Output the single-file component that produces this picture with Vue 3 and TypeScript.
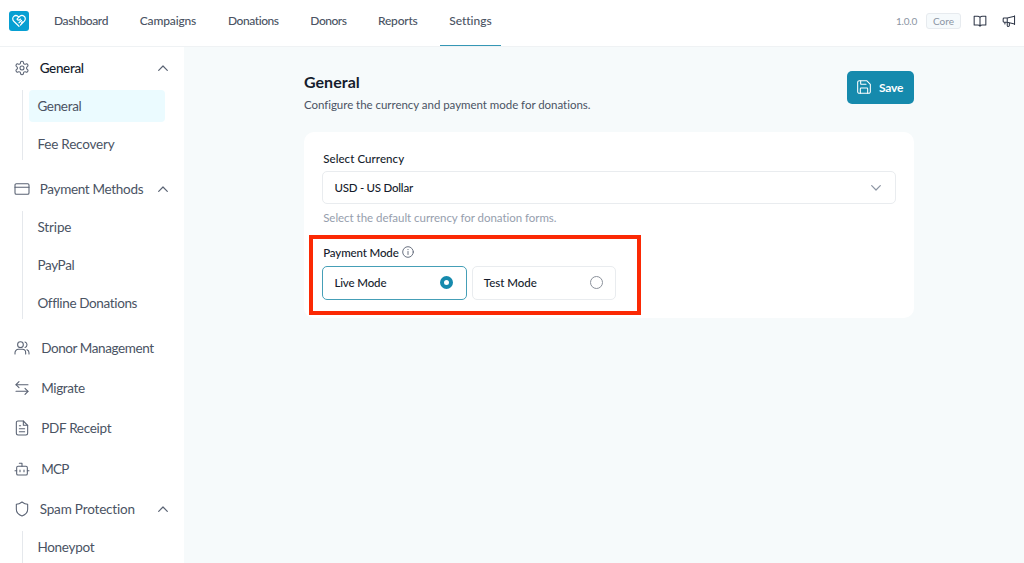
<script setup lang="ts">
interface Entry {
  label: string
  width: number
}
interface Group extends Entry {
  icon: string[]
  children?: Entry[]
  strong?: boolean
}

const nav: Entry[] = [
  { label: 'Dashboard', width: 54 },
  { label: 'Campaigns', width: 56.5 },
  { label: 'Donations', width: 51 },
  { label: 'Donors', width: 36 },
  { label: 'Reports', width: 39.5 },
  { label: 'Settings', width: 42 },
]

const groups: Group[] = [
  {
    label: 'General',
    width: 44,
    strong: true,
    icon: [
      'M12.22 2h-.44a2 2 0 0 0-2 2v.18a2 2 0 0 1-1 1.73l-.43.25a2 2 0 0 1-2 0l-.15-.08a2 2 0 0 0-2.73.73l-.22.38a2 2 0 0 0 .73 2.73l.15.1a2 2 0 0 1 1 1.72v.51a2 2 0 0 1-1 1.74l-.15.09a2 2 0 0 0-.73 2.73l.22.38a2 2 0 0 0 2.73.73l.15-.08a2 2 0 0 1 2 0l.43.25a2 2 0 0 1 1 1.73V20a2 2 0 0 0 2 2h.44a2 2 0 0 0 2-2v-.18a2 2 0 0 1 1-1.73l.43-.25a2 2 0 0 1 2 0l.15.08a2 2 0 0 0 2.73-.73l.22-.39a2 2 0 0 0-.73-2.73l-.15-.08a2 2 0 0 1-1-1.74v-.5a2 2 0 0 1 1-1.74l.15-.09a2 2 0 0 0 .73-2.73l-.22-.38a2 2 0 0 0-2.73-.73l-.15.08a2 2 0 0 1-2 0l-.43-.25a2 2 0 0 1-1-1.73V4a2 2 0 0 0-2-2z',
      'M15 12a3 3 0 1 1-6 0 3 3 0 0 1 6 0z',
    ],
    children: [
      { label: 'General', width: 44 },
      { label: 'Fee Recovery', width: 77 },
    ],
  },
  {
    label: 'Payment Methods',
    width: 103.5,
    icon: ['M3.5 4h17a2 2 0 0 1 2 2v12a2 2 0 0 1-2 2h-17a2 2 0 0 1-2-2V6a2 2 0 0 1 2-2z', 'M1.5 9.5h21'],
    children: [
      { label: 'Stripe', width: 34 },
      { label: 'PayPal', width: 37 },
      { label: 'Offline Donations', width: 99.5 },
    ],
  },
  {
    label: 'Donor Management',
    width: 112.5,
    icon: [
      'M14 7a4.3 4.3 0 1 1-8.6 0 4.3 4.3 0 0 1 8.6 0z',
      'M1.5 21v-2a5 5 0 0 1 5-5h6a5 5 0 0 1 5 5v2',
      'M16.5 2.9a4.3 4.3 0 0 1 0 8.2',
      'M19.5 14.5a5 5 0 0 1 3 4.5v2',
    ],
  },
  {
    label: 'Migrate',
    width: 43.5,
    icon: ['M21 7H3', 'M7.5 2.5 3 7l4.500 4.500', 'M3 17h18', 'M16.500 12.500 21 17l-4.500 4.500'],
  },
  {
    label: 'PDF Receipt',
    width: 70,
    icon: [
      'M14 1.5H6a2.5 2.5 0 0 0-2.5 2.5v16A2.5 2.5 0 0 0 6 22.500h12a2.500 2.500 0 0 0 2.500-2.500V8z',
      'M14 1.5V8h6.5',
      'M8 8.5h2',
      'M8 13h8',
      'M8 17.5h8',
    ],
  },
  {
    label: 'MCP',
    width: 27.5,
    icon: [
      'M12 8V3.5H8',
      'M6 8h12a2 2 0 0 1 2 2v9a2 2 0 0 1-2 2H6a2 2 0 0 1-2-2v-9a2 2 0 0 1 2-2z',
      'M1.5 14.5H4',
      'M20 14.5h2.5',
      'M9 13.5v2.5',
      'M15 13.5v2.5',
    ],
  },
  {
    label: 'Spam Protection',
    width: 95.5,
    icon: ['M20.5 12.5c0 5.500-3.500 8.300-8.500 10-5-1.700-8.500-4.500-8.500-10V5c3 0 6-1.500 8.500-3.500C14.500 3.500 17.500 5 20.500 5z'],
    children: [{ label: 'Honeypot', width: 57 }],
  },
]

const modes = [
  { label: 'Live Mode', width: 52, checked: true },
  { label: 'Test Mode', width: 53, checked: false },
]

// Tracks the letters of a label so that it fills the given width.
const vFit = {
  mounted(el: HTMLElement, binding: { value: number }) {
    const natural = el.getBoundingClientRect().width
    const count = (el.textContent ?? '').length
    el.style.letterSpacing = `${(binding.value - natural) / count}px`
  },
}
</script>

<template>
  <div class="app">
    <header class="topbar">
      <div class="logo">
        <svg viewBox="0 0 20 20" width="20" height="20">
          <path d="M10 15.300 4.800 10.300C1.500 6.500 6.500 2.300 9.800 6.200 13.200 2.300 18.500 6.300 15.300 10.200L11.500 14" />
          <path d="M9.800 6.200 8 8.200c1 1.500 2.500 1.200 3.500-.1M10 11.800l2.500-2.300M12.500 12l1-1" />
        </svg>
      </div>
      <nav class="nav">
        <a v-for="item in nav" :key="item.label" :class="{ active: item.label === 'Settings' }">
          <span v-fit="item.width">{{ item.label }}</span>
        </a>
      </nav>
      <div class="tools">
        <span v-fit="21" class="version">1.0.0</span>
        <span class="badge"><span v-fit="21">Core</span></span>
        <svg class="book" viewBox="0 0 24 24" width="14" height="14">
          <path d="M12 6c-1-1.700-2.500-2-4.500-2H2v15h6c2 0 3.200.5 4 2 .8-1.500 2-2 4-2h6V4h-5.500c-2 0-3.500.3-4.500 2zM12 6v15" />
        </svg>
        <svg class="horn" viewBox="0 0 24 24" width="14" height="14">
          <path d="M21.500 3v15M21.500 4 9 7H3.500A1.500 1.500 0 0 0 2 8.500v4A1.500 1.500 0 0 0 3.500 14H9l12.500 3M9 7v7M5 14v3M9 14.500v5a1.800 1.800 0 0 0 3.600 0v-4" />
        </svg>
      </div>
    </header>

    <div class="body">
      <aside class="sidebar">
        <section v-for="group in groups" :key="group.label" class="group">
          <div class="head" :class="{ strong: group.strong, single: !group.children }">
            <svg class="icon" viewBox="0 0 24 24" width="16" height="16">
              <path v-for="d in group.icon" :key="d" :d="d" />
            </svg>
            <span v-fit="group.width">{{ group.label }}</span>
            <svg v-if="group.children" class="chevron" viewBox="0 0 10 6" width="10" height="6">
              <path d="M.7 5.300 5 1l4.300 4.300" />
            </svg>
          </div>
          <ul v-if="group.children" class="children">
            <li v-for="child in group.children" :key="child.label" :class="{ current: child.label === 'General' }">
              <span v-fit="child.width">{{ child.label }}</span>
            </li>
          </ul>
        </section>
      </aside>

      <main class="main">
        <div class="title-row">
          <div>
            <h1><span v-fit="56">General</span></h1>
            <p><span v-fit="286.5">Configure the currency and payment mode for donations.</span></p>
          </div>
          <button class="save">
            <svg viewBox="0 0 24 24" width="16" height="16">
              <path d="M16 2.500H5A2.500 2.500 0 0 0 2.500 5v14A2.500 2.500 0 0 0 5 21.500h14a2.500 2.500 0 0 0 2.500-2.500V8z" />
              <path d="M6.500 21.500v-7a1 1 0 0 1 1-1h9a1 1 0 0 1 1 1v7M7 2.500V7a1 1 0 0 0 1 1h7" />
            </svg>
            <span v-fit="24.5">Save</span>
          </button>
        </div>

        <div class="card">
          <div class="label"><span v-fit="81">Select Currency</span></div>
          <div class="select">
            <span v-fit="78.5">USD - US Dollar</span>
            <svg viewBox="0 0 10 6" width="10" height="6"><path d="M.7.7 5 5 9.300.7" /></svg>
          </div>
          <div class="hint"><span v-fit="233.5">Select the default currency for donation forms.</span></div>
          <div class="payment">
            <div class="label">
              <span v-fit="75.5">Payment Mode</span>
              <svg viewBox="0 0 12 12" width="12" height="12">
                <circle cx="6" cy="6" r="5.300" />
                <path d="M6 5.500v3M6 3.400v.3" />
              </svg>
            </div>
            <div class="modes">
              <div v-for="mode in modes" :key="mode.label" class="mode" :class="{ checked: mode.checked }">
                <span v-fit="mode.width">{{ mode.label }}</span>
                <i class="radio"></i>
              </div>
            </div>
            <div class="highlight"></div>
          </div>
        </div>
      </main>
    </div>
  </div>
</template>

<style>
body {
  overflow: hidden;
}
</style>

<style scoped>
.app {
  height: 563px;
  overflow: hidden;
  box-sizing: border-box;
  background: #f6fafb;
  color: #4a5363;
  font-family: Lato, 'Open Sans', sans-serif;
}
.app * {
  box-sizing: border-box;
}
svg {
  flex: none;
  fill: none;
  stroke: currentColor;
  stroke-linecap: round;
  stroke-linejoin: round;
}
span {
  white-space: nowrap;
}
.topbar {
  display: flex;
  align-items: flex-start;
  height: 47px;
  padding: 0 9px;
  border-bottom: 1px solid #eff2f4;
  background: #fff;
}
.logo {
  display: flex;
  width: 20px;
  height: 20px;
  margin-top: 10.5px;
  border-radius: 3px;
  background: #079fd2;
  color: #fff;
}
.logo svg {
  stroke-width: 1.2;
}
.nav {
  display: flex;
  gap: 12.7px;
  margin-left: 15.5px;
}
.nav a {
  display: flex;
  align-items: center;
  height: 46px;
  padding: 0 9.5px 4px;
  border-bottom: 1px solid transparent;
  font-size: 12px;
  font-weight: 500;
}
.nav a.active {
  border-bottom: 1px solid #3597b5;
}
.tools {
  display: flex;
  align-items: center;
  height: 41px;
  margin-left: auto;
  margin-right: -1px;
  color: #8c95a3;
  font-size: 10px;
}
.badge {
  display: flex;
  align-items: center;
  justify-content: center;
  width: 35px;
  height: 16px;
  margin-left: 9px;
  border: 1px solid #e7ebef;
  border-radius: 3px;
  background: #f6fafc;
}
.book,
.horn {
  margin-left: 12px;
  color: #303849;
  stroke-width: 1.8;
}
.horn {
  margin-left: 15px;
}
.body {
  display: flex;
  height: 516px;
}
.sidebar {
  display: flex;
  flex: none;
  flex-direction: column;
  gap: 8.3px;
  width: 184.4px;
  padding: 5.4px 14.4px 0 14px;
  background: #fff;
  font-size: 13.5px;
}
.group {
  flex: none;
}
.head {
  display: flex;
  align-items: center;
  height: 32px;
}
.icon {
  margin-right: 9.7px;
  color: #596273;
  stroke-width: 1.6;
}
.single .icon {
  margin-right: 11.2px;
}
.strong {
  color: #151c2c;
  font-weight: 500;
}
.chevron {
  margin-left: auto;
  margin-right: 2px;
  color: #596273;
  stroke-width: 1.2;
}
.children {
  display: flex;
  flex-direction: column;
  gap: 6.6px;
  margin: 6px 5.5px 4.5px 8px;
  padding: 0 0 0 6.4px;
  border-left: 1px solid #e5e8ec;
  list-style: none;
}
.children li {
  display: flex;
  align-items: center;
  height: 31.6px;
  padding-left: 8px;
  border-radius: 4px;
}
.children .current {
  background: #ebfbff;
}
.main {
  flex: 1;
  padding: 24px 109.6px 0 120.4px;
}
.title-row {
  display: flex;
  justify-content: space-between;
  height: 61px;
}
h1 {
  margin: 1px 0 0;
  color: #151c2c;
  font-size: 16px;
  font-weight: 700;
  line-height: 20px;
}
p {
  margin: 5px 0 0;
  font-size: 11.5px;
  line-height: 16px;
}
h1,
p {
  margin-left: -0.9px;
}
.save {
  display: flex;
  align-items: center;
  gap: 6.5px;
  width: 67px;
  height: 33px;
  padding: 0 0 1px 9px;
  border: 0;
  border-radius: 5px;
  background: #168aad;
  color: #fff;
  font: 700 12px Lato, sans-serif;
}
.save svg {
  stroke-width: 1.6;
}
.card {
  height: 186px;
  margin-left: -0.4px;
  padding: 18px 18.5px 0 18px;
  border-radius: 10px;
  background: #fff;
}
.label {
  display: flex;
  align-items: center;
  gap: 3.5px;
  height: 16px;
  padding-left: 0.8px;
  color: #151c2c;
  font-size: 11.5px;
  font-weight: 500;
}
.label svg {
  color: #596273;
  stroke-width: 0.9;
}
.select,
.mode {
  display: flex;
  align-items: center;
  justify-content: space-between;
  height: 34px;
  padding: 0 12.5px 1px 11px;
  border: 1px solid #e9ecef;
  border-radius: 5px;
  color: #151c2c;
  font-size: 11.5px;
  font-weight: 500;
}
.select {
  height: 33px;
  margin-top: 5px;
  padding-right: 14px;
  padding-bottom: 0;
}
.select svg {
  color: #8c95a3;
  stroke-width: 1.2;
}
.hint {
  height: 16px;
  margin: 6px 0 0 0.8px;
  color: #969ead;
  font-size: 11.5px;
  line-height: 16px;
}
.payment {
  position: relative;
  margin-top: 18px;
}
.modes {
  display: flex;
  gap: 5px;
  margin-top: 6px;
}
.mode {
  width: 144.4px;
}
.mode.checked {
  border-color: #459fb7;
}
.radio {
  width: 13px;
  height: 13px;
  border: 1px solid #8b919b;
  border-radius: 50%;
}
.checked .radio {
  border: 4px solid #168aad;
}
.highlight {
  position: absolute;
  top: -9px;
  left: -13.2px;
  width: 332px;
  height: 80px;
  border: 4px solid #fb2904;
}
</style>
